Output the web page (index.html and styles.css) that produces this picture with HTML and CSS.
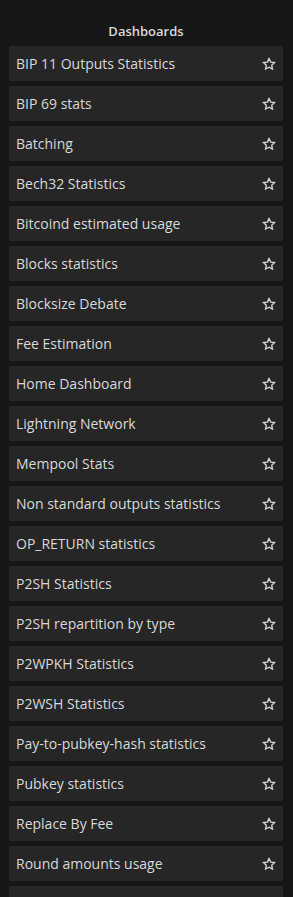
FILE: index.html
```html
<!DOCTYPE html>
<html lang="en">
<head>
    <meta charset="UTF-8">
    <meta name="viewport" content="width=device-width, initial-scale=1.0">
    <title>Dashboards</title>
    <link rel="stylesheet" href="styles.css">
</head>
<body>
    <main class="dash-panel">
        <h2 class="dash-title">Dashboards</h2>
        <ul class="dash-list" id="dashList"></ul>
    </main>

    <svg width="0" height="0" style="position:absolute">
        <symbol id="star-o" viewBox="0 0 24 24">
            <path d="M12 2.6l2.9 6.1 6.6.8-4.9 4.6 1.3 6.6L12 17.4l-5.9 3.3 1.3-6.6-4.9-4.6 6.6-.8z" fill="none" stroke="currentColor" stroke-width="2.2" stroke-linejoin="miter"/>
        </symbol>
    </svg>

    <script>
        const dashboards = [
            'BIP 11 Outputs Statistics',
            'BIP 69 stats',
            'Batching',
            'Bech32 Statistics',
            'Bitcoind estimated usage',
            'Blocks statistics',
            'Blocksize Debate',
            'Fee Estimation',
            'Home Dashboard',
            'Lightning Network',
            'Mempool Stats',
            'Non standard outputs statistics',
            'OP_RETURN statistics',
            'P2SH Statistics',
            'P2SH repartition by type',
            'P2WPKH Statistics',
            'P2WSH Statistics',
            'Pay-to-pubkey-hash statistics',
            'Pubkey statistics',
            'Replace By Fee',
            'Round amounts usage',
            'SegWit Adoption'
        ];

        const list = document.getElementById('dashList');
        dashboards.forEach((name) => {
            const li = document.createElement('li');
            li.classList.add('dash-item');
            li.innerHTML = `<span class="dash-name">${name}</span><svg class="dash-star"><use href="#star-o"/></svg>`;
            list.appendChild(li);
        });
    </script>
</body>
</html>
```

FILE: styles.css
```css
body {
    margin: 0;
    padding: 0;
    background-color: #161616;
    color: #d8d9da;
    font-family: 'Open Sans', 'Noto Sans', sans-serif;
}

.dash-panel {
    padding: 0 10px 0 9px;
}

.dash-title {
    margin: 0;
    padding-top: 21px;
    height: 25px;
    text-align: center;
    font-size: 13px;
    font-weight: 600;
    line-height: 20px;
    color: #d8d9da;
}

.dash-list {
    list-style: none;
    margin: 0;
    padding: 0;
    display: flex;
    flex-direction: column;
    gap: 5px;
}

.dash-item {
    display: flex;
    align-items: center;
    justify-content: space-between;
    height: 35px;
    padding: 0 7px;
    background-color: #262626;
    font-size: 14px;
}

.dash-name {
    white-space: nowrap;
}

.dash-star {
    width: 14px;
    height: 14px;
    color: #d8d9da;
}
```
